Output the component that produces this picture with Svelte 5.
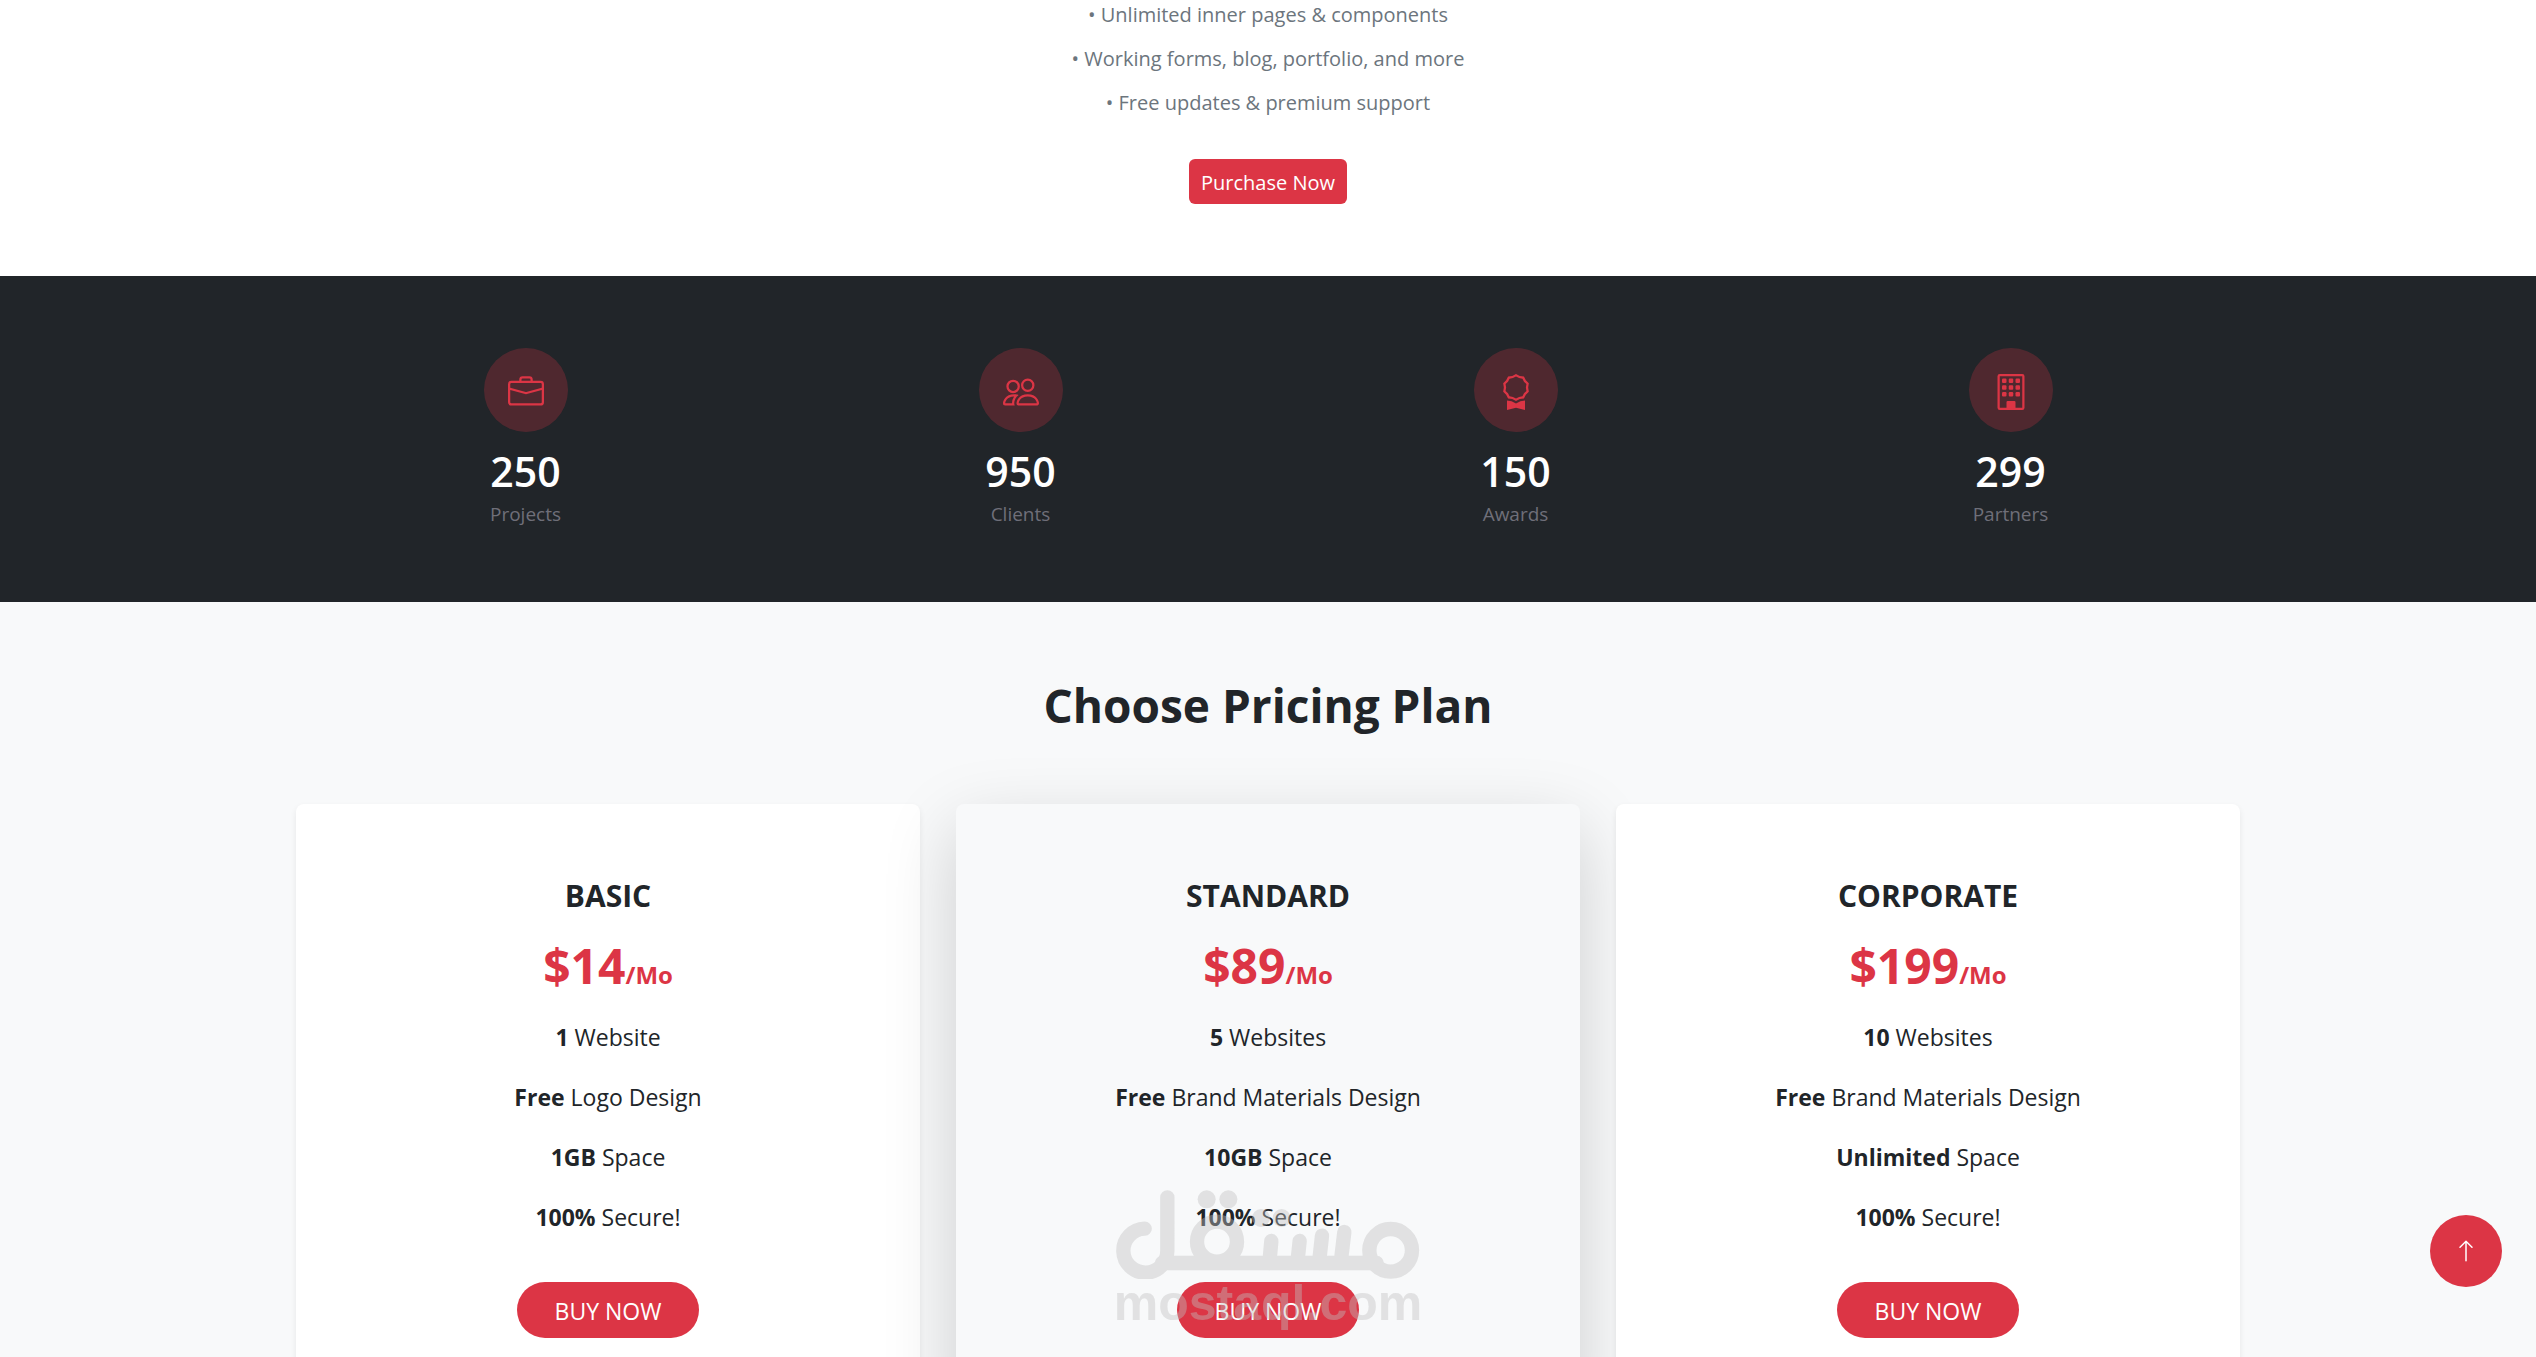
<script>
  const perks = [
    'Unlimited inner pages & components',
    'Working forms, blog, portfolio, and more',
    'Free updates & premium support'
  ];

  const stats = [
    { icon: 'briefcase', value: 250, label: 'Projects' },
    { icon: 'people', value: 950, label: 'Clients' },
    { icon: 'award', value: 150, label: 'Awards' },
    { icon: 'building', value: 299, label: 'Partners' }
  ];

  const plans = [
    {
      name: 'BASIC',
      price: '$14',
      features: [['1', 'Website'], ['Free', 'Logo Design'], ['1GB', 'Space'], ['100%', 'Secure!']]
    },
    {
      name: 'STANDARD',
      price: '$89',
      featured: true,
      features: [['5', 'Websites'], ['Free', 'Brand Materials Design'], ['10GB', 'Space'], ['100%', 'Secure!']]
    },
    {
      name: 'CORPORATE',
      price: '$199',
      features: [['10', 'Websites'], ['Free', 'Brand Materials Design'], ['Unlimited', 'Space'], ['100%', 'Secure!']]
    }
  ];

  const paths = {
    briefcase: [
      'M6.5 1A1.5 1.5 0 0 0 5 2.5V3H1.5A1.5 1.5 0 0 0 0 4.5v8A1.5 1.5 0 0 0 1.5 14h13a1.5 1.5 0 0 0 1.5-1.5v-8A1.5 1.5 0 0 0 14.5 3H11v-.5A1.5 1.5 0 0 0 9.5 1h-3zm0 1h3a.5.5 0 0 1 .5.5V3H6v-.5a.5.5 0 0 1 .5-.5zm1.886 6.914L15 7.151V12.5a.5.5 0 0 1-.5.5h-13a.5.5 0 0 1-.5-.5V7.15l6.614 1.764a1.5 1.5 0 0 0 .772 0zM1.5 4h13a.5.5 0 0 1 .5.5v1.616L8.129 7.948a.5.5 0 0 1-.258 0L1 6.116V4.5a.5.5 0 0 1 .5-.5z'
    ],
    people: [
      'M15 14s1 0 1-1-1-4-5-4-5 3-5 4 1 1 1 1h8zm-7.978-1A.261.261 0 0 1 7 12.996c.001-.264.167-1.03.76-1.72C8.312 10.629 9.282 10 11 10c1.717 0 2.687.63 3.24 1.276.593.69.758 1.457.76 1.72l-.008.002a.274.274 0 0 1-.014.002H7.022zM11 7a2 2 0 1 0 0-4 2 2 0 0 0 0 4zm3-2a3 3 0 1 1-6 0 3 3 0 0 1 6 0zM6.936 9.28a5.88 5.88 0 0 0-1.23-.247A7.35 7.35 0 0 0 5 9c-4 0-5 3-5 4 0 .667.333 1 1 1h4.216A2.238 2.238 0 0 1 5 13c0-1.01.377-2.042 1.09-2.904.243-.294.526-.569.846-.816zM4.92 10A5.493 5.493 0 0 0 4 13H1c0-.26.164-1.03.76-1.724.545-.636 1.492-1.256 3.16-1.275zM1.5 5.5a3 3 0 1 1 6 0 3 3 0 0 1-6 0zm3-2a2 2 0 1 0 0 4 2 2 0 0 0 0-4z'
    ],
    award: [
      'M9.669.864 8 0 6.331.864l-1.858.282-.842 1.68-1.337 1.32L2.6 6l-.306 1.854 1.337 1.32.842 1.68 1.858.282L8 12l1.669-.864 1.858-.282.842-1.68 1.337-1.32L13.4 6l.306-1.854-1.337-1.32-.842-1.68L9.669.864zm1.196 1.193.684 1.365 1.086 1.072L12.387 6l.248 1.506-1.086 1.072-.684 1.365-1.51.229L8 10.874l-1.355-.702-1.51-.229-.684-1.365-1.086-1.072L3.614 6l-.25-1.506 1.087-1.072.684-1.365 1.51-.229L8 1.126l1.356.702 1.509.229z',
      'M4 11.794V16l4-1 4 1v-4.206l-2.018.306L8 13.126 6.018 12.1 4 11.794z'
    ],
    building: [
      'M2 1a1 1 0 0 1 1-1h10a1 1 0 0 1 1 1v14a1 1 0 0 1-1 1H3a1 1 0 0 1-1-1V1zm11 0H3v14h3v-2.5a.5.5 0 0 1 .5-.5h3a.5.5 0 0 1 .5.5V15h3V1z',
      ...[2.5, 5.5, 8.5].flatMap((y) =>
        [4, 7, 10].map(
          (x) =>
            `M${x} ${y}a.5.5 0 0 1 .5-.5h1a.5.5 0 0 1 .5.5v1a.5.5 0 0 1-.5.5h-1a.5.5 0 0 1-.5-.5v-1z`
        )
      )
    ]
  };

  function toTop() {
    window.scrollTo({ top: 0, behavior: 'smooth' });
  }
</script>

<main>
  <section class="intro">
    <ul class="perks">
      {#each perks as perk}
        <li>• {perk}</li>
      {/each}
    </ul>
    <a class="purchase" href="#pricing">Purchase Now</a>
  </section>

  <section class="stats">
    <div class="stats-row">
      {#each stats as stat}
        <div class="stat">
          <div class="badge">
            <svg viewBox="0 0 16 16" aria-hidden="true">
              {#each paths[stat.icon] as d}
                <path {d} />
              {/each}
            </svg>
          </div>
          <h3>{stat.value}</h3>
          <p>{stat.label}</p>
        </div>
      {/each}
    </div>
  </section>

  <section class="pricing" id="pricing">
    <h2>Choose Pricing Plan</h2>
    <div class="plans">
      {#each plans as plan}
        <article class="plan" class:featured={plan.featured}>
          <h4>{plan.name}</h4>
          <div class="price">{plan.price}<small>/Mo</small></div>
          <ul class="features">
            {#each plan.features as [amount, what]}
              <li><strong>{amount}</strong> {what}</li>
            {/each}
          </ul>
          <button class="buy" type="button">BUY NOW</button>
        </article>
      {/each}
    </div>
  </section>
</main>

<div class="watermark">
  <svg viewBox="108 90 912 268" aria-hidden="true">
    <path d="M194 206A66 66 0 1 0 262 271V112" />
    <path d="M246 309H890" />
    <circle cx="411" cy="245" r="60" />
    <path d="M574 243L568 309M659 243L652 309M726 227L717 309M793 216L782 309" />
    <circle cx="932" cy="271" r="64" />
    <g class="dots">
      <circle cx="380" cy="118" r="27" />
      <circle cx="445" cy="118" r="27" />
      <circle cx="543" cy="174" r="27" />
      <circle cx="605" cy="174" r="27" />
    </g>
  </svg>
  <span>mostaql.com</span>
</div>

<button class="to-top" type="button" aria-label="Back to top" onclick={toTop}>
  <svg viewBox="0 0 16 16" aria-hidden="true">
    <path d="M8 15a.5.5 0 0 0 .5-.5V2.707l3.146 3.147a.5.5 0 0 0 .708-.708l-4-4a.5.5 0 0 0-.708 0l-4 4a.5.5 0 1 0 .708.708L7.5 2.707V14.5a.5.5 0 0 0 .5.5z" />
  </svg>
</button>

<style>
  :global(html) {
    scrollbar-width: none;
  }

  :global(body) {
    margin: 0;
    background: #fff;
    color: #212529;
    font-family: 'Segoe UI', 'Open Sans', 'Noto Sans', sans-serif;
  }

  main {
    overflow: hidden;
    text-align: center;
  }

  h2,
  h3,
  h4,
  p,
  ul {
    margin: 0;
    padding: 0;
  }

  ul {
    list-style: none;
  }

  .intro {
    display: flex;
    flex-direction: column;
    align-items: center;
    padding-bottom: 72px;
  }

  .perks {
    display: flex;
    flex-direction: column;
    gap: 14px;
    margin-bottom: 41px;
    color: #6c757d;
    font-size: 20px;
    line-height: 30px;
  }

  .purchase {
    padding: 8px 12px 6px;
    border-radius: 6px;
    background: #dc3545;
    color: #fff;
    font-size: 20px;
    line-height: 31px;
    text-decoration: none;
  }

  .stats {
    padding: 72px 0;
    background: #212529;
  }

  .stats-row {
    display: grid;
    grid-template-columns: repeat(4, 1fr);
    max-width: 1980px;
    margin: 0 auto;
  }

  .stat {
    display: flex;
    flex-direction: column;
    align-items: center;
  }

  .badge {
    display: flex;
    align-items: center;
    justify-content: center;
    width: 84px;
    height: 84px;
    margin-bottom: 12px;
    border-radius: 50%;
    background: rgba(220, 53, 69, 0.25);
  }

  .badge svg {
    width: 36px;
    height: 36px;
    margin-top: 3px;
    fill: #dc3545;
  }

  .stat h3 {
    color: #fff;
    font-size: 41px;
    font-weight: 600;
    line-height: 54px;
  }

  .stat p {
    color: #6f6f79;
    font-size: 19px;
    line-height: 32px;
  }

  .pricing {
    padding: 74px 24px 72px;
    background: #f8f9fa;
  }

  .pricing h2 {
    margin-bottom: 70px;
    font-size: 46px;
    font-weight: 700;
    line-height: 58px;
  }

  .plans {
    display: grid;
    grid-template-columns: repeat(3, 1fr);
    gap: 36px;
    max-width: 1944px;
    margin: 0 auto;
  }

  .plan {
    position: relative;
    display: flex;
    flex-direction: column;
    align-items: center;
    padding: 74px 24px 72px;
    border-radius: 8px;
    background: #fff;
    box-shadow: 0 3px 6px rgba(0, 0, 0, 0.075);
  }

  .plan.featured {
    background: #f8f9fa;
    box-shadow: 0 24px 72px rgba(0, 0, 0, 0.175);
  }

  .plan h4 {
    margin-bottom: 16px;
    font-size: 30px;
    font-weight: 700;
    line-height: 36px;
  }

  .price {
    margin-bottom: 17px;
    color: #dc3545;
    font-size: 48px;
    font-weight: 700;
    line-height: 72px;
  }

  .price small {
    font-size: 24px;
    line-height: 24px;
  }

  .features {
    display: flex;
    flex-direction: column;
    gap: 24px;
    margin-bottom: 47px;
    font-size: 23px;
    line-height: 36px;
  }

  .buy {
    padding: 11px 38px 9px;
    border: 0;
    border-radius: 28px;
    background: #dc3545;
    color: #fff;
    font: inherit;
    font-size: 23px;
    line-height: 36px;
  }

  .watermark {
    position: fixed;
    bottom: 30px;
    left: 50%;
    display: flex;
    flex-direction: column;
    align-items: center;
    width: 304px;
    margin-left: -152px;
    color: #c0c0c0;
    opacity: 0.41;
    pointer-events: none;
  }

  .watermark svg {
    width: 304px;
    fill: none;
    stroke: currentColor;
    stroke-width: 43;
    stroke-linecap: round;
  }

  .watermark .dots {
    fill: currentColor;
    stroke: none;
  }

  .watermark span {
    font-family: 'Liberation Sans', sans-serif;
    font-size: 50px;
    font-weight: 700;
    line-height: 48px;
  }

  .to-top {
    position: fixed;
    right: 34px;
    bottom: 70px;
    display: flex;
    align-items: center;
    justify-content: center;
    width: 72px;
    height: 72px;
    padding: 0;
    border: 0;
    border-radius: 50%;
    background: #dc3545;
  }

  .to-top svg {
    width: 24px;
    height: 24px;
    fill: #fff;
  }
</style>
